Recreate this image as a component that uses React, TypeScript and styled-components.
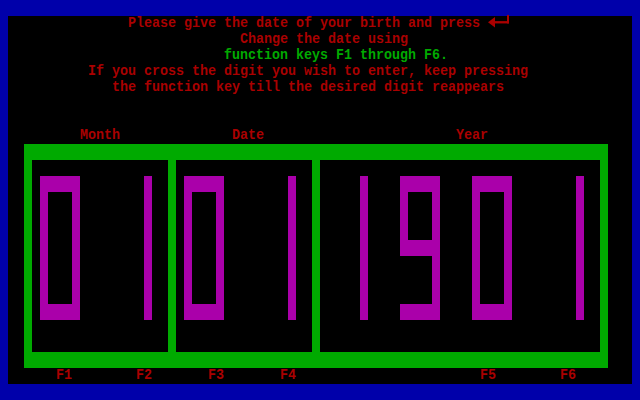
import React from "react";
import styled, { createGlobalStyle } from "styled-components";

const GlobalStyle = createGlobalStyle`
  html, body {
    margin: 0;
    padding: 0;
    background: #0000aa;
  }
`;

const Screen = styled.div`
  width: 640px;
  height: 400px;
  box-sizing: border-box;
  padding: 16px 8px; /* the blue overscan border */
  background: #0000aa;
  font-family: "Liberation Mono", "DejaVu Sans Mono", monospace;
  font-size: 13.33px;
  font-weight: bold;
  line-height: 16px;
`;

const Body = styled.div`
  width: 624px;
  height: 368px;
  background: #000;
  display: flex;
  flex-direction: column;
`;

const Prompt = styled.div`
  display: flex;
  flex-direction: column;
  height: 112px;
`;

const Line = styled.div<{ $indent: number; $green?: boolean }>`
  height: 16px;
  padding-left: ${(p) => p.$indent * 8}px;
  color: ${(p) => (p.$green ? "#00aa00" : "#aa0000")};
  white-space: pre;
  display: flex;
  align-items: center;
  transform: scaleY(1.15);
`;

const ColumnRow = styled.div`
  display: grid;
  grid-template-columns: repeat(78, 8px);
  height: 16px;
  color: #aa0000;
  transform: scaleY(1.15);
`;

const Label = styled.span<{ $col: number }>`
  grid-column: ${(p) => p.$col + 1} / span 8;
  white-space: pre;
`;

const Frame = styled.div`
  margin-left: 16px;
  width: 584px;
  height: 224px;
  box-sizing: border-box;
  padding: 16px 8px;
  background: #00aa00;
  display: flex;
  gap: 8px;
`;

const Panel = styled.div<{ $width: number }>`
  width: ${(p) => p.$width}px;
  height: 192px;
  box-sizing: border-box;
  padding: 16px 0 0 8px;
  background: #000;
  display: flex;
  gap: 32px;
  align-items: flex-start;
`;

const Arrow = () => (
  <svg width="24" height="16" viewBox="0 0 24 16" style={{ display: "block" }}>
    <polygon points="0,6.5 7,2 7,11" fill="#aa0000" />
    <rect x="6" y="5.5" width="15" height="2" fill="#aa0000" />
    <rect x="19" y="0" width="2" height="7.5" fill="#aa0000" />
  </svg>
);

// segments: a top, b upper right, c lower right, d bottom, e lower left, f upper left, g middle
const SEGMENTS: Record<string, [number, number, number, number]> = {
  a: [0, 0, 40, 16],
  b: [32, 0, 8, 80],
  c: [32, 64, 8, 80],
  d: [0, 128, 40, 16],
  e: [0, 64, 8, 80],
  f: [0, 0, 8, 80],
  g: [0, 64, 40, 16],
};

const DIGITS: Record<string, string> = {
  "0": "abcdef",
  "1": "bc",
  "9": "abcdfg",
};

const Digit = ({ value }: { value: string }) => (
  <svg width="40" height="144" viewBox="0 0 40 144" style={{ display: "block", flex: "none" }}>
    {DIGITS[value].split("").map((s) => {
      const [x, y, w, h] = SEGMENTS[s];
      return <rect key={s} x={x} y={y} width={w} height={h} fill="#aa00aa" />;
    })}
  </svg>
);

const fields = [
  { width: 136, digits: "01" },
  { width: 136, digits: "01" },
  { width: 280, digits: "1901" },
];

const keys = [
  { name: "F1", col: 6 },
  { name: "F2", col: 16 },
  { name: "F3", col: 25 },
  { name: "F4", col: 34 },
  { name: "F5", col: 59 },
  { name: "F6", col: 69 },
];

export default function App() {
  return (
    <>
      <GlobalStyle />
      <Screen>
        <Body>
          <Prompt>
            <Line $indent={15}>
              {"Please give the date of your birth and press "}
              <Arrow />
            </Line>
            <Line $indent={29}>Change the date using</Line>
            <Line $indent={27} $green>
              function keys F1 through F6.
            </Line>
            <Line $indent={10}>
              If you cross the digit you wish to enter, keep pressing
            </Line>
            <Line $indent={13}>
              the function key till the desired digit reappears
            </Line>
          </Prompt>
          <ColumnRow>
            <Label $col={9}>Month</Label>
            <Label $col={28}>Date</Label>
            <Label $col={56}>Year</Label>
          </ColumnRow>
          <Frame>
            {fields.map((f, i) => (
              <Panel key={i} $width={f.width}>
                {f.digits.split("").map((d, j) => (
                  <Digit key={j} value={d} />
                ))}
              </Panel>
            ))}
          </Frame>
          <ColumnRow>
            {keys.map((k) => (
              <Label key={k.name} $col={k.col}>
                {k.name}
              </Label>
            ))}
          </ColumnRow>
        </Body>
      </Screen>
    </>
  );
}
